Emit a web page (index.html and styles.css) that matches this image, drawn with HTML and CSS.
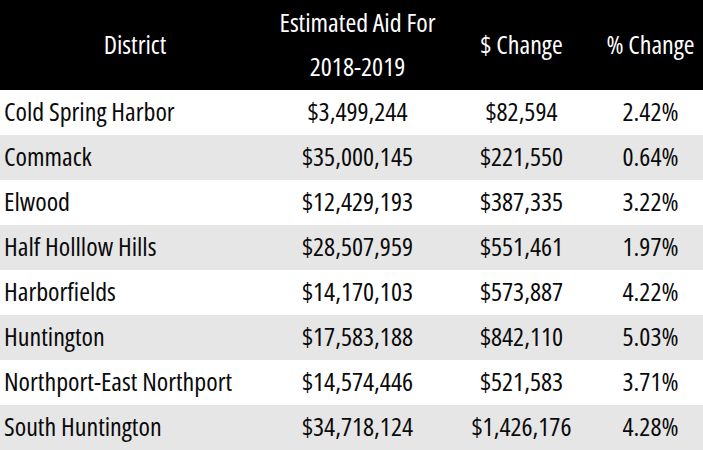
FILE: index.html
```html
<!DOCTYPE html>
<html lang="en">
<head>
<meta charset="utf-8">
<title>Estimated Aid 2018-2019</title>
<link rel="stylesheet" href="styles.css">
</head>
<body>
<table class="aid-table">
  <colgroup>
    <col class="col-district">
    <col class="col-aid">
    <col class="col-change">
    <col class="col-pct">
  </colgroup>
  <thead>
    <tr>
      <th>District</th>
      <th>Estimated Aid For<br>2018-2019</th>
      <th>$ Change</th>
      <th>% Change</th>
    </tr>
  </thead>
  <tbody>
    <tr><td class="name">Cold Spring Harbor</td><td>$3,499,244</td><td>$82,594</td><td>2.42%</td></tr>
    <tr><td class="name">Commack</td><td>$35,000,145</td><td>$221,550</td><td>0.64%</td></tr>
    <tr><td class="name">Elwood</td><td>$12,429,193</td><td>$387,335</td><td>3.22%</td></tr>
    <tr><td class="name">Half Holllow Hills</td><td>$28,507,959</td><td>$551,461</td><td>1.97%</td></tr>
    <tr><td class="name">Harborfields</td><td>$14,170,103</td><td>$573,887</td><td>4.22%</td></tr>
    <tr><td class="name">Huntington</td><td>$17,583,188</td><td>$842,110</td><td>5.03%</td></tr>
    <tr><td class="name">Northport-East Northport</td><td>$14,574,446</td><td>$521,583</td><td>3.71%</td></tr>
    <tr><td class="name">South Huntington</td><td>$34,718,124</td><td>$1,426,176</td><td>4.28%</td></tr>
  </tbody>
</table>
</body>
</html>
```
FILE: styles.css
```css
html, body {
  margin: 0;
  padding: 0;
  background: #ffffff;
}

.aid-table {
  width: 703px;
  border-collapse: collapse;
  border-spacing: 0;
  table-layout: fixed;
  font-family: "Open Sans", "Liberation Sans", sans-serif;
  font-stretch: 75%;
  font-size: 26px;
  font-weight: 400;
  color: #0a0a0a;
}

.col-district { width: 270px; }
.col-aid { width: 175px; }
.col-change { width: 153px; }
.col-pct { width: 105px; }

.aid-table th {
  height: 88px;
  padding: 0 0 2px;
  background: #000000;
  color: #ffffff;
  font-weight: 400;
  line-height: 44px;
  text-align: center;
  vertical-align: middle;
  white-space: nowrap;
}

.aid-table td {
  height: 43px;
  padding: 0 0 2px;
  line-height: 43px;
  text-align: center;
  vertical-align: middle;
  white-space: nowrap;
}

.aid-table tbody tr:nth-child(odd) { background: #ffffff; }
.aid-table tbody tr:nth-child(even) { background: #e6e6e6; }

.aid-table td.name {
  text-align: left;
  padding-left: 4px;
}
```
